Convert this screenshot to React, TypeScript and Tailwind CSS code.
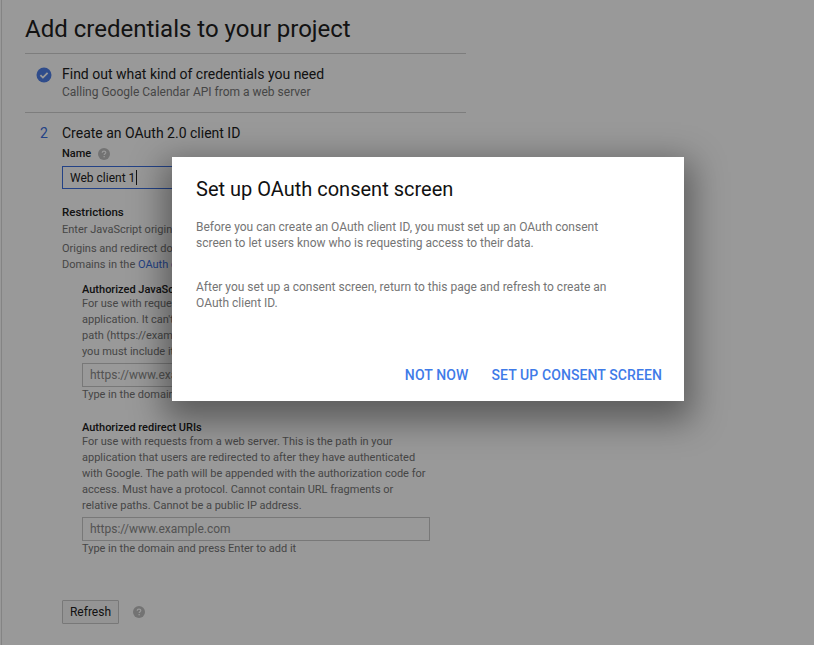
export default function App() {
  return (
    <div className="relative h-[645px] w-[814px] overflow-hidden bg-white font-['Roboto',sans-serif] text-[13px] text-[#212121]">
      {/* Page behind the dialog */}
      <div className="ml-[1px] h-full border-l border-[#dcdcdc] pl-[23px]">
        <div className="w-[441px]">
          <h1 className="flex h-[53px] items-start pt-[13px] text-[24px] leading-[32px]">Add credentials to your project</h1>
          <div className="border-t border-[#d0d0d0]" />
          <div className="flex h-[58px] pt-[11px]">
            <div className="w-[37px] pl-[11px] pt-[2px]">
              <svg width="16" height="16" viewBox="0 0 16 16">
                <circle cx="8" cy="8" r="7.5" fill="#4f7fe8" />
                <path d="M4.4 8.2l2.5 2.4 4.7-4.8" fill="none" stroke="#fff" strokeWidth="1.8" />
              </svg>
            </div>
            <div>
              <div className="text-[14px] leading-[18px]">Find out what kind of credentials you need</div>
              <div className="mt-[1px] text-[12px] leading-[17px] text-[#757575]">Calling Google Calendar API from a web server</div>
            </div>
          </div>
          <div className="border-t border-[#d0d0d0]" />
          <div className="flex pt-[11px]">
            <div className="w-[37px] pl-[15px] text-[14px] leading-[18px] text-[#3b6fe0]">2</div>
            <div className="w-[404px]">
              <div className="text-[14px] leading-[18px]">Create an OAuth 2.0 client ID</div>
              <div className="mt-[3px] flex h-[18px] items-center gap-[7px] text-[11px] font-medium">
                Name
                <HelpIcon />
              </div>
              <div className="mt-[3px] flex h-[23px] w-[300px] items-center border border-[#3b6fe0] pl-[7px] text-[12px]">
                Web client 1<span className="ml-[1px] h-[15px] w-[1px] bg-[#212121]" />
              </div>
              <div className="mt-[15px] text-[11.5px] font-medium leading-[17px]">Restrictions</div>
              <div className="text-[11px] leading-[16px] text-[#757575]">
                <div className="mt-[1px]">Enter JavaScript origins, redirect URIs, or both</div>
                <div className="mt-[3px]">Origins and redirect domains must be added to the list</div>
                <div>Domains in the <span className="text-[#3b6fe0]">OAuth consent settings</span></div>
              </div>
              <div className="ml-[20px] w-[348px]">
                <div className="mt-[9px] text-[11px] font-medium leading-[16px]">Authorized JavaScript origins</div>
                <div className="-mt-[2px] text-[11px] leading-[16px] text-[#757575]">
                  <div>For use with requests from a browser. This is the origin</div>
                  <div>application. It can't contain a wildcard or a</div>
                  <div>path (https://example.com/subdir). If you're using</div>
                  <div>you must include it in the origin URI.</div>
                </div>
                <UriInput />
                <div className="text-[11px] leading-[16px] text-[#757575]">Type in the domain and press Enter to add it</div>
                <div className="mt-[17px] text-[11px] font-medium leading-[16px]">Authorized redirect URIs</div>
                <div className="-mt-[2px] text-[11px] leading-[16px] text-[#757575]">
                  <div>For use with requests from a web server. This is the path in your</div>
                  <div>application that users are redirected to after they have authenticated</div>
                  <div>with Google. The path will be appended with the authorization code for</div>
                  <div>access. Must have a protocol. Cannot contain URL fragments or</div>
                  <div>relative paths. Cannot be a public IP address.</div>
                </div>
                <UriInput />
                <div className="text-[11px] leading-[16px] text-[#757575]">Type in the domain and press Enter to add it</div>
              </div>
              <div className="mt-[43px] flex items-center gap-[14px]">
                <button className="h-[24px] w-[57px] rounded-[1px] border border-[#c8c8c8] bg-[#f7f7f7] text-[12px]">Refresh</button>
                <HelpIcon />
              </div>
            </div>
          </div>
        </div>
      </div>

      {/* Scrim */}
      <div className="absolute inset-0 bg-black/40" />

      {/* Dialog */}
      <div className="absolute left-[172px] top-[157px] flex h-[244px] w-[512px] flex-col bg-white px-[24px] shadow-[0_12px_32px_8px_rgba(0,0,0,0.4)]">
        <h2 className="mt-[19px] text-[20px] leading-[26px] text-[#111111]">Set up OAuth consent screen</h2>
        <p className="mt-[17px] text-[12px] leading-[16px] text-[#757575]">
          Before you can create an OAuth client ID, you must set up an OAuth consent<br />
          screen to let users know who is requesting access to their data.
        </p>
        <p className="mt-[28px] text-[12px] leading-[16px] text-[#757575]">
          After you set up a consent screen, return to this page and refresh to create an<br />
          OAuth client ID.
        </p>
        <div className="mt-auto -mr-[2px] mb-[17px] flex justify-end gap-[23px] text-[14px] font-medium leading-[18px] tracking-[0.1px] text-[#3f7be8]">
          <button>NOT NOW</button>
          <button>SET UP CONSENT SCREEN</button>
        </div>
      </div>
    </div>
  );
}

function HelpIcon() {
  return (
    <svg width="12" height="12" viewBox="0 0 12 12">
      <circle cx="6" cy="6" r="6" fill="#c0c0c0" />
      <path d="M4.2 4.7c0-1 .8-1.6 1.8-1.6s1.8.6 1.8 1.5c0 1.2-1.6 1.2-1.6 2.5" fill="none" stroke="#fff" strokeWidth="1.2" />
      <rect x="5.5" y="8" width="1.3" height="1.3" fill="#fff" />
    </svg>
  );
}

function UriInput() {
  return (
    <div className="mt-[3px] flex h-[24px] w-[348px] items-center border border-[#c8c8c8] pl-[7px] text-[12px] text-[#8a8a8a]">
      https://www.example.com
    </div>
  );
}
